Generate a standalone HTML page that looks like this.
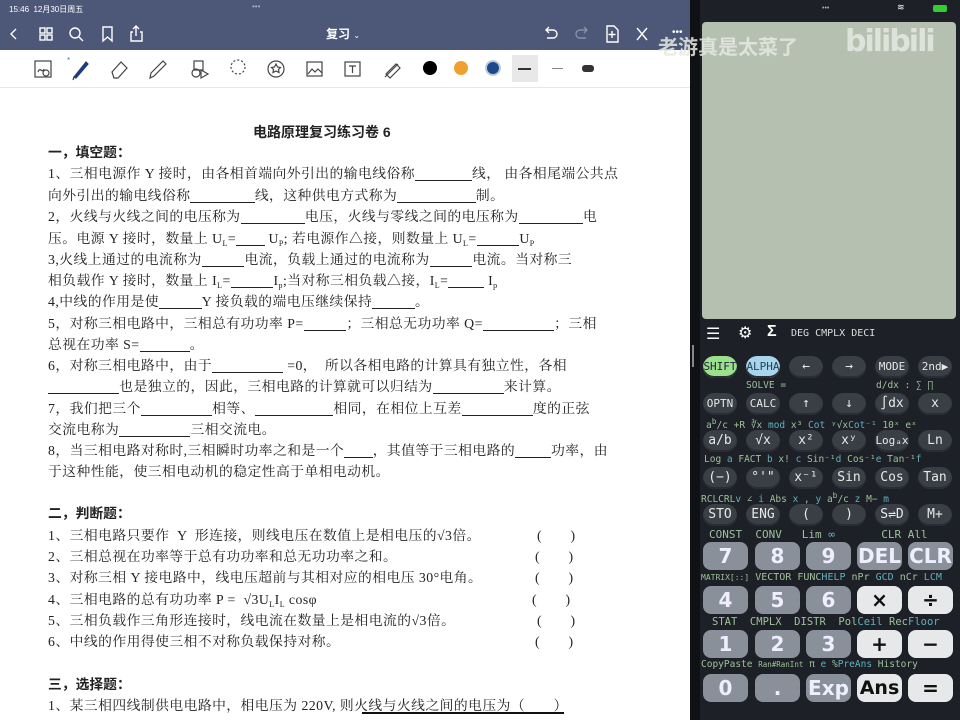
<!DOCTYPE html>
<html><head><meta charset="utf-8"><style>
*{margin:0;padding:0;box-sizing:border-box}
body{width:960px;height:720px;overflow:hidden;position:relative;background:#1d2026;font-family:"Liberation Sans","Noto Sans CJK SC",sans-serif}
#left{position:absolute;left:0;top:0;width:690px;height:720px;background:#fff}
#bar{position:absolute;left:0;top:0;width:690px;height:50px;background:#4d5777;color:#fff}
#tool{position:absolute;left:0;top:50px;width:690px;height:38px;background:#fff;border-bottom:1px solid #e6e6e6}
.doc{position:absolute;left:48px;font-family:"Liberation Serif","Noto Serif CJK SC",serif;font-size:13.8px;letter-spacing:0.45px;color:#222;white-space:nowrap;line-height:16px}
.b{font-weight:bold;font-family:"Liberation Sans","Noto Sans CJK SC",sans-serif;letter-spacing:0}
u{text-decoration:none;border-bottom:1px solid #222;display:inline-block;line-height:13px}
sub{font-size:8px;vertical-align:baseline;position:relative;top:3px;line-height:0}
#scr{position:absolute;left:702px;top:22px;width:254px;height:297px;background:#b6c0b0;border-radius:4px}
.k{position:absolute;width:34px;height:22px;border-radius:11px;background:#3a3e45;color:#e8e8e8;font-family:"DejaVu Sans Mono",monospace;font-size:13px;text-align:center;line-height:22px;box-shadow:inset 0 -2px 0 #2a2d33}
.K{position:absolute;width:45px;height:28px;border-radius:8px;background:#8a9099;color:#eef;font-family:"DejaVu Sans",sans-serif;font-weight:bold;font-size:20px;text-align:center;line-height:28px}
.W{background:#e6e8ea;color:#111}
.l{position:absolute;font-family:"DejaVu Sans Mono",monospace;font-size:9.5px;color:#9ec19a;white-space:nowrap}
.c{color:#5fb0c0}
.ic{position:absolute;color:#fff;font-size:16px}
</style></head><body>
<div id="left">
<div id="bar">
<div style="position:absolute;left:9px;top:4px;font-size:8px">15:46 &nbsp;12月30日周五</div>
<div style="position:absolute;left:252px;top:2px;font-size:8px;color:#aab">•••</div>
<svg style="position:absolute;left:0;top:22px" width="690" height="24" fill="none" stroke="#fff" stroke-width="1.4">
<path d="M16 7l-5 5 5 5"/>
<rect x="40" y="6" width="5" height="5"/><rect x="47" y="6" width="5" height="5"/><rect x="40" y="13" width="5" height="5"/><rect x="47" y="13" width="5" height="5"/>
<circle cx="75" cy="11" r="5"/><path d="M79 15l4 4"/>
<path d="M103 5h9v14l-4.5-4-4.5 4z"/>
<path d="M133 10h-2v9h11v-9h-2M136 14V4M133 7l3-3 3 3"/>
<path d="M546 8h7a4 4 0 010 8h-6M549 5l-3 3 3 3"/>
<path d="M587 8h-7a4 4 0 000 8h6M584 5l3 3-3 3" stroke="#8890a8"/>
<path d="M607 4h7l4 4v12h-11zM612 9v7M608.5 12.5h7"/>
<path d="M637 6l10 12M647 6l-10 12"/>
</svg>
<div style="position:absolute;left:326px;top:25px;font-size:12px;font-weight:bold">复习 <span style="font-size:8px;font-weight:normal">⌄</span></div>
<div style="position:absolute;left:672px;top:27px;font-size:10px">•••</div>
</div>
<div id="tool">
<svg width="690" height="38" fill="none" stroke="#444" stroke-width="1.2">
<rect x="35" y="11" width="16" height="16"/><path d="M38 22c2-6 4 2 6-3"/><circle cx="46" cy="23" r="3"/>
<path d="M74 27l12-15 2 2-12 14z" fill="#1f3c7a" stroke="#1f3c7a"/><path d="M74 27l-1 3" stroke="#1f3c7a"/>
<text x="67" y="13" font-size="8" fill="#3a7bd5" stroke="none">*</text>
<path d="M112 22l9-10 6 6-9 10h-4z"/>
<path d="M150 28l1-5 12-12 3 3-12 12z"/>
<rect x="194" y="11" width="9" height="9"/><circle cx="196" cy="23" r="4"/><path d="M201 20l7 4-7 4z"/>
<circle cx="238" cy="17" r="7" stroke-dasharray="2 2"/>
<circle cx="276" cy="19" r="8"/><path d="M276 14l1.5 3 3 .5-2 2 .5 3-3-1.5-3 1.5.5-3-2-2 3-.5z"/>
<rect x="307" y="12" width="15" height="14"/><path d="M308 24l4-5 3 3 3-3 4 4"/>
<rect x="345" y="12" width="15" height="14"/><path d="M349 16h7M352.5 16v7"/>
<path d="M385 27l13-13M386 24l4 4 10-10-4-4z"/>
</svg>
<div style="position:absolute;left:423px;top:11px;width:14px;height:14px;border-radius:50%;background:#000"></div>
<div style="position:absolute;left:454px;top:11px;width:14px;height:14px;border-radius:50%;background:#f0a030"></div>
<div style="position:absolute;left:485px;top:10px;width:16px;height:16px;border-radius:50%;background:#1a4a8a;border:2px solid #bcd"></div>
<div style="position:absolute;left:512px;top:5px;width:26px;height:27px;background:#e8e8e8"></div>
<div style="position:absolute;left:518px;top:18px;width:13px;height:2px;background:#333"></div>
<div style="position:absolute;left:552px;top:18px;width:11px;height:1px;background:#888"></div>
<div style="position:absolute;left:582px;top:15px;width:12px;height:7px;border-radius:3px;background:#333"></div>
</div>
<div class="doc b" style="left:253px;top:124px;font-size:14px">电路原理复习练习卷 6</div>
<div class="doc b" style="top:145px">一，填空题：</div>
<div class="doc" style="top:166px">1、三相电源作 Y 接时，由各相首端向外引出的输电线俗称<u>&emsp;&emsp;&emsp;&emsp;</u>线，&nbsp;由各相尾端公共点</div>
<div class="doc" style="top:188px">向外引出的输电线俗称<u>&emsp;&emsp;&emsp;&emsp;&ensp;</u>线，这种供电方式称为<u>&emsp;&emsp;&emsp;&emsp;&emsp;&ensp;</u>制。</div>
<div class="doc" style="top:209px">2，火线与火线之间的电压称为<u>&emsp;&emsp;&emsp;&emsp;&ensp;</u>电压，火线与零线之间的电压称为<u>&emsp;&emsp;&emsp;&emsp;&ensp;</u>电</div>
<div class="doc" style="top:231px">压。电源 Y 接时，数量上 U<sub>L</sub>=<u>&emsp;&emsp;</u> U<sub>P</sub>; 若电源作△接，则数量上 U<sub>L</sub>=<u>&emsp;&emsp;&emsp;</u>U<sub>P</sub></div>
<div class="doc" style="top:252px">3,火线上通过的电流称为<u>&emsp;&emsp;&emsp;</u>电流，负载上通过的电流称为<u>&emsp;&emsp;&emsp;</u>电流。当对称三</div>
<div class="doc" style="top:273px">相负载作 Y 接时，数量上 I<sub>L</sub>=<u>&emsp;&emsp;&emsp;</u>I<sub>p</sub>;当对称三相负载△接，I<sub>L</sub>=<u>&emsp;&emsp;&ensp;</u> I<sub>p</sub></div>
<div class="doc" style="top:294px">4,中线的作用是使<u>&emsp;&emsp;&emsp;</u>Y 接负载的端电压继续保持<u>&emsp;&emsp;&emsp;</u>。</div>
<div class="doc" style="top:316px">5，对称三相电路中，三相总有功功率 P=<u>&emsp;&emsp;&emsp;</u>；三相总无功功率 Q=<u>&emsp;&emsp;&emsp;&emsp;&emsp;</u>；三相</div>
<div class="doc" style="top:337px">总视在功率 S=<u>&emsp;&emsp;&emsp;&ensp;</u>。</div>
<div class="doc" style="top:358px">6，对称三相电路中，由于<u>&emsp;&emsp;&emsp;&emsp;&emsp;</u> =0，&nbsp;&nbsp;所以各相电路的计算具有独立性，各相</div>
<div class="doc" style="top:379px"><u>&emsp;&emsp;&emsp;&emsp;&emsp;</u>也是独立的，因此，三相电路的计算就可以归结为<u>&emsp;&emsp;&emsp;&emsp;&emsp;</u>来计算。</div>
<div class="doc" style="top:401px">7，我们把三个<u>&emsp;&emsp;&emsp;&emsp;&emsp;</u>相等、<u>&emsp;&emsp;&emsp;&emsp;&emsp;&ensp;</u>相同，在相位上互差<u>&emsp;&emsp;&emsp;&emsp;&emsp;</u>度的正弦</div>
<div class="doc" style="top:422px">交流电称为<u>&emsp;&emsp;&emsp;&emsp;&emsp;</u>三相交流电。</div>
<div class="doc" style="top:443px">8，当三相电路对称时,三相瞬时功率之和是一个<u>&emsp;&emsp;</u>，其值等于三相电路的<u>&emsp;&emsp;&ensp;</u>功率，由</div>
<div class="doc" style="top:464px">于这种性能，使三相电动机的稳定性高于单相电动机。</div>
<div class="doc b" style="top:506px">二，判断题：</div>
<div class="doc" style="top:528px">1、三相电路只要作 &nbsp;Y &nbsp;形连接，则线电压在数值上是相电压的√3倍。</div>
<div class="doc" style="top:549px">2、三相总视在功率等于总有功功率和总无功功率之和。</div>
<div class="doc" style="top:570px">3、对称三相 Y 接电路中，线电压超前与其相对应的相电压 30°电角。</div>
<div class="doc" style="top:592px">4、三相电路的总有功功率 P = &nbsp;√3U<sub>L</sub>I<sub>L</sub> cosφ</div>
<div class="doc" style="top:613px">5、三相负载作三角形连接时，线电流在数量上是相电流的√3倍。</div>
<div class="doc" style="top:634px">6、中线的作用得使三相不对称负载保持对称。</div>
<div class="doc" style="left:537px;top:528px">(&emsp;&emsp;)</div>
<div class="doc" style="left:535px;top:549px">(&emsp;&emsp;)</div>
<div class="doc" style="left:535px;top:570px">(&emsp;&emsp;)</div>
<div class="doc" style="left:532px;top:592px">(&emsp;&emsp;)</div>
<div class="doc" style="left:537px;top:613px">(&emsp;&emsp;)</div>
<div class="doc" style="left:535px;top:634px">(&emsp;&emsp;)</div>
<div class="doc b" style="top:677px">三，选择题：</div>
<div class="doc" style="top:698px">1、某三相四线制供电电路中，相电压为 220V, 则火线与火线之间的电压为（&emsp;&emsp;）</div>
<div style="position:absolute;left:362px;top:712px;width:202px;height:2px;background:#111"></div>
</div>
<div style="position:absolute;left:690px;top:0;width:10px;height:720px;background:#101114"></div>
<div style="position:absolute;left:822px;top:5px;font-size:7px;color:#aaa">•••</div>
<div style="position:absolute;left:933px;top:5px;width:14px;height:7px;background:#3c3;border-radius:2px"></div>
<div style="position:absolute;left:897px;top:2px;color:#fff;font-size:9px">≋</div>
<div id="scr"></div>
<div style="position:absolute;left:658px;top:31px;font-size:20px;font-weight:bold;color:#e6e9e2;font-family:'Noto Sans CJK SC',sans-serif;opacity:.85">老游真是太菜了</div>
<div style="position:absolute;left:845px;top:24px;font-size:30px;font-weight:bold;color:#e2e6df;font-family:'DejaVu Sans',sans-serif;letter-spacing:-2px;opacity:.9">bilibili</div>
<div class="ic" style="left:706px;top:324px">☰</div>
<div class="ic" style="left:738px;top:323px">⚙</div>
<div class="ic" style="left:767px;top:323px;font-weight:bold">Σ</div>
<div class="l" style="left:791px;top:328px;color:#ddd;font-size:10px">DEG CMPLX DECI</div>
<div style="position:absolute;left:692px;top:345px;width:2px;height:22px;background:#888"></div>
<div class="k" style="left:703px;top:356px;background:#9be08a;color:#224;font-size:11px">SHIFT</div>
<div class="k" style="left:746px;top:356px;background:#a8d4ec;color:#245;font-size:11px">ALPHA</div>
<div class="k" style="left:789px;top:356px">←</div>
<div class="k" style="left:832px;top:356px">→</div>
<div class="k" style="left:875px;top:356px;font-size:11px">MODE</div>
<div class="k" style="left:918px;top:356px;font-size:11px">2nd▶</div>
<div class="l" style="left:746px;top:380px">SOLVE =</div><div class="l" style="left:876px;top:380px">d/dx : ∑ ∏</div>
<div class="k" style="left:703px;top:393px;font-size:11px">OPTN</div><div class="k" style="left:746px;top:393px;font-size:11px">CALC</div><div class="k" style="left:789px;top:393px">↑</div><div class="k" style="left:832px;top:393px">↓</div><div class="k" style="left:875px;top:393px">∫dx</div><div class="k" style="left:918px;top:393px">x</div>
<div class="l" style="left:706px;top:417px">a<sup>b</sup>/c +R ∛x <span class="c">mod</span> x³ <span class="c">Cot</span> ʸ√x<span class="c">Cot⁻¹</span>  10ˣ   eˣ</div>
<div class="k" style="left:703px;top:430px">a/b</div><div class="k" style="left:746px;top:430px">√x</div><div class="k" style="left:789px;top:430px">x²</div><div class="k" style="left:832px;top:430px">xʸ</div><div class="k" style="left:875px;top:430px;font-size:11px">Logₐx</div><div class="k" style="left:918px;top:430px">Ln</div>
<div class="l" style="left:704px;top:454px">Log <span class="c">a</span> FACT <span class="c">b</span> x! <span class="c">c</span> Sin⁻¹<span class="c">d</span> Cos⁻¹<span class="c">e</span> Tan⁻¹<span class="c">f</span></div>
<div class="k" style="left:703px;top:467px">(−)</div><div class="k" style="left:746px;top:467px">°'"</div><div class="k" style="left:789px;top:467px">x⁻¹</div><div class="k" style="left:832px;top:467px">Sin</div><div class="k" style="left:875px;top:467px">Cos</div><div class="k" style="left:918px;top:467px">Tan</div>
<div class="l" style="left:701px;top:491px">RCLCRL<span class="c">v</span> ∠ <span class="c">i</span> Abs <span class="c">x</span> , <span class="c">y</span> a<sup>b</sup>/c <span class="c">z</span> M− <span class="c">m</span></div>
<div class="k" style="left:703px;top:504px">STO</div><div class="k" style="left:746px;top:504px">ENG</div><div class="k" style="left:789px;top:504px">(</div><div class="k" style="left:832px;top:504px">)</div><div class="k" style="left:875px;top:504px">S⇌D</div><div class="k" style="left:918px;top:504px">M+</div>
<div class="l" style="left:709px;top:528px;font-size:11px">CONST &nbsp;CONV &nbsp; Lim <span class="c">∞</span> &nbsp; &nbsp; &nbsp; CLR All</div>
<div class="K" style="left:703px;top:542px">7</div><div class="K" style="left:755px;top:542px">8</div><div class="K" style="left:806px;top:542px">9</div><div class="K" style="left:857px;top:542px">DEL</div><div class="K" style="left:908px;top:542px">CLR</div>
<div class="l" style="left:701px;top:572px;font-size:10px"><span style="font-size:8px">MATRIX[::]</span> VECTOR FUNC<span class="c">HELP</span> nPr <span class="c">GCD</span> nCr <span class="c">LCM</span></div>
<div class="K" style="left:703px;top:586px">4</div><div class="K" style="left:755px;top:586px">5</div><div class="K" style="left:806px;top:586px">6</div><div class="K W" style="left:857px;top:586px">×</div><div class="K W" style="left:908px;top:586px">÷</div>
<div class="l" style="left:712px;top:616px;font-size:10.5px">STAT &nbsp;CMPLX &nbsp;DISTR &nbsp;Pol<span class="c">Ceil</span> Rec<span class="c">Floor</span></div>
<div class="K" style="left:703px;top:630px">1</div><div class="K" style="left:755px;top:630px">2</div><div class="K" style="left:806px;top:630px">3</div><div class="K W" style="left:857px;top:630px">+</div><div class="K W" style="left:908px;top:630px">−</div>
<div class="l" style="left:701px;top:659px;font-size:9.5px">CopyPaste <span style="font-size:7.5px">Ran#RanInt</span> π <span class="c">e</span> %<span class="c">PreAns</span> History</div>
<div class="K" style="left:703px;top:674px">0</div><div class="K" style="left:755px;top:674px">.</div><div class="K" style="left:806px;top:674px">Exp</div><div class="K W" style="left:857px;top:674px;font-size:19px">Ans</div><div class="K W" style="left:908px;top:674px">=</div>
</body></html>
